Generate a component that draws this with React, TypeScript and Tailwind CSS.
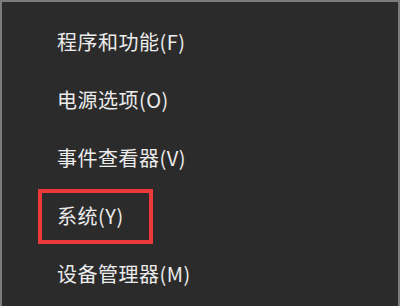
import React from "react";

const items = ["程序和功能(F)", "电源选项(O)", "事件查看器(V)", "系统(Y)", "设备管理器(M)"];

const App: React.FC = () => {
  return (
    <div
      className="w-[400px] h-[306px] overflow-hidden bg-[#2b2b2b] border-t-2 border-x-2 border-[#7c7c7c] pt-[11px] text-[#ececec]"
      style={{ fontFamily: '"Noto Sans CJK SC", "Noto Sans", sans-serif' }}
    >
      {items.map((label, i) =>
        i === 3 ? (
          <div key={label} className="h-[58px] pl-[36px] flex items-center">
            <div className="w-[115px] h-[55px] border-4 border-[#ec3a3a] pl-[15px] flex items-center">
              <span className="text-[20px] leading-none tracking-[0.5px]">{label}</span>
            </div>
          </div>
        ) : (
          <div key={label} className="h-[58px] pl-[55px] flex items-center">
            <span className="text-[20px] leading-none tracking-[0.5px]">{label}</span>
          </div>
        )
      )}
    </div>
  );
};

export default App;
